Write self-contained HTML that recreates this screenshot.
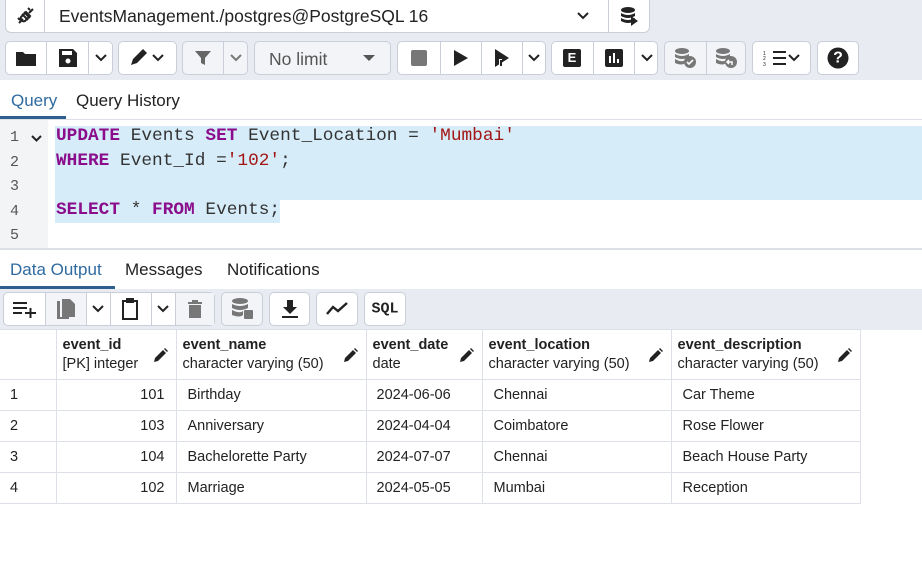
<!DOCTYPE html>
<html><head><meta charset="utf-8"><style>
*{box-sizing:border-box;margin:0;padding:0}
body{width:922px;height:561px;position:relative;background:#fff;font-family:"Liberation Sans",sans-serif;color:#222;overflow:hidden}
.a{position:absolute}
.btn{position:absolute;background:#fff;border:1px solid #c9ced8;border-radius:5px;height:34px}
.gb{background:#f3f4f7}
.sep{position:absolute;top:0;bottom:0;width:1px;background:#c9ced8}
.ic{position:absolute;top:50%;transform:translate(-50%,-50%)}
.code{font-family:"Liberation Mono",monospace;font-size:17.8px;position:absolute;left:56px;white-space:pre;color:#333}
.kw{color:#8b0d8b;font-weight:bold}.st{color:#a31515}
.ln{position:absolute;left:10px;font-family:"Liberation Mono",monospace;font-size:15px;color:#555}
table{border-collapse:collapse;position:absolute;left:0;top:329px;font-size:14.5px}
td,th{border:1px solid #dde0e6;height:31px;padding:0 6px;text-align:left;font-weight:normal}
th{height:50px;vertical-align:middle;position:relative;line-height:19px}
th b{font-weight:bold}
</style></head><body>
<div class="a" style="left:0;top:0;width:922px;height:80px;background:#e8ebf1"></div>
<div class="btn" style="left:5px;top:-2px;width:645px;height:35px;border-radius:0 0 6px 6px">
<div class="sep" style="left:38px"></div><div class="sep" style="left:602px"></div>
<svg class="ic" style="left:20px" width="22" height="22" viewBox="0 0 22 22" fill="none" stroke="#222" stroke-width="2"><path d="M4 18l4-4M18 4l-4 4M7 9l6 6M9 7l6 6M6 12a3 3 0 0 0 4 4l5-5-4-4-5 5zM3 13l2 2M13 3l2 2"/></svg>
<div class="a" style="left:53px;top:7px;font-size:17.5px;color:#222">EventsManagement./postgres@PostgreSQL 16</div>
<svg class="ic" style="left:577px" width="14" height="10" viewBox="0 0 14 10"><path d="M2 2l5 5 5-5" stroke="#222" stroke-width="2" fill="none"/></svg>
<svg class="ic" style="left:623px" width="20" height="20" viewBox="0 0 20 20" fill="#222"><ellipse cx="9" cy="4" rx="7" ry="3"/><path d="M2 7q7 4 14 0v3q-7 4-14 0zM2 12q7 4 14 0v3q-7 4-14 0z"/><path d="M12 10l7 5-7 5z"/></svg>
</div>
<div class="btn" style="left:5px;top:41px;width:108px">
<div class="sep" style="left:40px"></div><div class="sep" style="left:82px"></div>
<svg class="ic" style="left:20px" width="20" height="16" viewBox="0 0 20 16"><path d="M0 2h7l2 2h11v12H0z" fill="#222"/></svg>
<svg class="ic" style="left:62px" width="18" height="18" viewBox="0 0 18 18"><path d="M0 0h14l4 4v14H0z" fill="#222"/><rect x="3" y="2" width="10" height="4" fill="#fff"/><circle cx="9" cy="12" r="2.5" fill="#fff"/></svg>
<svg class="ic" style="left:95px" width="14" height="10" viewBox="0 0 14 10"><path d="M2 2l5 5 5-5" stroke="#222" stroke-width="2" fill="none"/></svg>
</div>
<div class="btn" style="left:118px;top:41px;width:59px">
<svg class="ic" style="left:29px" width="40" height="20" viewBox="0 0 40 20"><path d="M3 17l2-6 10-10 4 4-10 10z" fill="#222"/><path d="M25 7l5 5 5-5" stroke="#222" stroke-width="2" fill="none"/></svg>
</div>
<div class="btn gb" style="left:182px;top:41px;width:66px">
<div class="sep" style="left:40px"></div>
<svg class="ic" style="left:20px" width="18" height="18" viewBox="0 0 18 18"><path d="M1 2h16l-6 7v7l-4-2V9z" fill="#666"/></svg>
<svg class="ic" style="left:53px" width="14" height="10" viewBox="0 0 14 10"><path d="M2 2l5 5 5-5" stroke="#777" stroke-width="2" fill="none"/></svg>
</div>
<div class="btn gb" style="left:254px;top:41px;width:137px">
<div class="a" style="left:14px;top:7px;font-size:17.5px;color:#555">No limit</div>
<svg class="ic" style="left:114px" width="12" height="8" viewBox="0 0 12 8"><path d="M0 1h12L6 7z" fill="#555"/></svg>
</div>
<div class="btn" style="left:397px;top:41px;width:149px">
<div class="sep" style="left:42px"></div><div class="sep" style="left:83px"></div><div class="sep" style="left:124px"></div>
<svg class="ic" style="left:21px" width="16" height="16"><rect width="16" height="16" rx="2" fill="#777"/></svg>
<svg class="ic" style="left:63px" width="14" height="16"><path d="M0 0l14 8-14 8z" fill="#222"/></svg>
<svg class="ic" style="left:104px" width="16" height="18"><path d="M1 0l14 9-14 9z" fill="#222"/><path d="M5 10h3v8H5z" fill="#fff"/><path d="M6 11h2v6H6z" fill="#222"/></svg>
<svg class="ic" style="left:136px" width="14" height="10" viewBox="0 0 14 10"><path d="M2 2l5 5 5-5" stroke="#222" stroke-width="2" fill="none"/></svg>
</div>
<div class="btn" style="left:551px;top:41px;width:107px">
<div class="sep" style="left:41px"></div><div class="sep" style="left:82px"></div>
<div class="ic" style="left:20px;width:18px;height:18px;background:#222;border-radius:2px;color:#fff;font-weight:bold;font-size:13px;text-align:center;line-height:18px">E</div>
<svg class="ic" style="left:62px" width="18" height="18"><rect width="18" height="18" rx="2" fill="#222"/><path d="M5 7v7M9 4v10M13 10v4" stroke="#fff" stroke-width="2"/></svg>
<svg class="ic" style="left:95px" width="14" height="10" viewBox="0 0 14 10"><path d="M2 2l5 5 5-5" stroke="#222" stroke-width="2" fill="none"/></svg>
</div>
<div class="btn gb" style="left:664px;top:41px;width:82px">
<div class="sep" style="left:41px"></div>
<svg class="ic" style="left:20px" width="22" height="20" viewBox="0 0 22 20" fill="#777"><ellipse cx="8" cy="3" rx="7" ry="3"/><path d="M1 6q7 4 14 0v3q-7 4-14 0zM1 11q7 4 10 1v3q-3 3-10 0z"/><circle cx="16" cy="14" r="6"/><path d="M13 14l2 2 4-4" stroke="#fff" stroke-width="1.6" fill="none"/></svg>
<svg class="ic" style="left:61px" width="22" height="20" viewBox="0 0 22 20" fill="#777"><ellipse cx="8" cy="3" rx="7" ry="3"/><path d="M1 6q7 4 14 0v3q-7 4-14 0zM1 11q7 4 10 1v3q-3 3-10 0z"/><circle cx="16" cy="14" r="6"/><path d="M14 12l-2 2 2 2M12 14h5v3" stroke="#fff" stroke-width="1.5" fill="none"/></svg>
</div>
<div class="btn" style="left:752px;top:41px;width:59px">
<svg class="ic" style="left:29px" width="40" height="18" viewBox="0 0 40 18"><path d="M11 3h13M11 9h13M11 15h13" stroke="#222" stroke-width="2"/><text x="1" y="6" font-size="5" fill="#222">1</text><text x="1" y="11" font-size="5" fill="#222">2</text><text x="1" y="17" font-size="5" fill="#222">3</text><path d="M27 6l5 5 5-5" stroke="#222" stroke-width="2" fill="none"/></svg>
</div>
<div class="btn" style="left:817px;top:41px;width:42px">
<div class="ic" style="left:20px;width:21px;height:21px;border-radius:50%;background:#222;color:#fff;font-weight:bold;font-size:16px;text-align:center;line-height:21px">?</div>
</div>
<div class="a" style="left:11px;top:91px;font-size:17px;color:#2f6aa0">Query</div>
<div class="a" style="left:0;top:116px;width:66px;height:3px;background:#2f5f8f"></div>
<div class="a" style="left:76px;top:91px;font-size:17px;color:#222">Query History</div>
<div class="a" style="left:0;top:119px;width:922px;height:1px;background:#dde0e6"></div>
<div class="a" style="left:0;top:120px;width:48px;height:128px;background:#f3f4f6"></div>
<div class="a" style="left:55px;top:126px;width:867px;height:74px;background:#d6ecf9"></div>
<div class="a" style="left:55px;top:200px;width:225px;height:23px;background:#d6ecf9"></div>
<div class="ln" style="top:129px">1</div><div class="ln" style="top:154px">2</div><div class="ln" style="top:178px">3</div><div class="ln" style="top:203px">4</div><div class="ln" style="top:227px">5</div>
<svg class="a" style="left:31px;top:135px" width="11" height="8"><path d="M1 1l4.5 4.5L10 1" stroke="#222" stroke-width="2" fill="none"/></svg>
<div class="code" style="top:126px"><span class="kw">UPDATE</span> Events <span class="kw">SET</span> Event_Location = <span class="st">'Mumbai'</span></div>
<div class="code" style="top:151px"><span class="kw">WHERE</span> Event_Id =<span class="st">'102'</span>;</div>
<div class="code" style="top:200px"><span class="kw">SELECT</span> * <span class="kw">FROM</span> Events;</div>
<div class="a" style="left:0;top:248px;width:922px;height:2px;background:#dde0e6"></div>
<div class="a" style="left:10px;top:260px;font-size:17px;color:#2f6aa0">Data Output</div>
<div class="a" style="left:125px;top:260px;font-size:17px">Messages</div>
<div class="a" style="left:227px;top:260px;font-size:17px">Notifications</div>
<div class="a" style="left:0;top:286px;width:115px;height:3px;background:#2f5f8f"></div>
<div class="a" style="left:0;top:289px;width:922px;height:41px;background:#e8ebf1"></div>
<div class="btn" style="left:3px;top:292px;width:212px">
<div class="sep" style="left:41px"></div><div class="sep" style="left:82px"></div><div class="sep" style="left:106px"></div><div class="sep" style="left:147px"></div><div class="sep" style="left:171px"></div>
<div class="a gb" style="left:42px;top:0;width:40px;height:32px"></div>
<div class="a gb" style="left:172px;top:0;width:38px;height:32px"></div>
<svg class="ic" style="left:21px" width="26" height="18"><path d="M1 3h14M1 8h14M1 13h9M13 13h11M18.5 8v11" stroke="#222" stroke-width="2"/></svg>
<svg class="ic" style="left:62px" width="18" height="20"><path d="M0 2h3v16h9v2H0z" fill="#777"/><path d="M5 0h8l5 5v13H5z" fill="#777"/></svg>
<svg class="ic" style="left:94px" width="14" height="10"><path d="M2 2l5 5 5-5" stroke="#222" stroke-width="2" fill="none"/></svg>
<svg class="ic" style="left:126px" width="18" height="22"><path d="M2 3h14v18H2z" stroke="#222" stroke-width="2" fill="none"/><rect x="5" y="0" width="8" height="5" fill="#222"/></svg>
<svg class="ic" style="left:159px" width="14" height="10"><path d="M2 2l5 5 5-5" stroke="#222" stroke-width="2" fill="none"/></svg>
<svg class="ic" style="left:191px" width="14" height="18"><path d="M0 2h14v2H0zM4 0h6v2H4zM1 5h12v13H1z" fill="#777"/></svg>
</div>
<div class="btn gb" style="left:221px;top:292px;width:42px">
<svg class="ic" style="left:20px" width="22" height="22" viewBox="0 0 22 22" fill="#777"><ellipse cx="9" cy="3" rx="8" ry="3"/><path d="M1 6q8 4 16 0v4q-8 4-16 0zM1 12q8 4 11 1v4q-3 3-11 0z"/><rect x="13" y="12" width="9" height="9" rx="1"/></svg>
</div>
<div class="btn" style="left:269px;top:292px;width:41px"><svg class="ic" style="left:20px" width="16" height="18"><path d="M5 0h6v7h4l-7 7-7-7h4zM0 16h16v2H0z" fill="#222"/></svg></div>
<div class="btn" style="left:316px;top:292px;width:42px"><svg class="ic" style="left:20px" width="22" height="14"><path d="M1 12l6-7 5 4 9-8" stroke="#222" stroke-width="2.4" fill="none"/></svg></div>
<div class="btn" style="left:364px;top:292px;width:42px"><div class="ic" style="left:20px;font-family:'Liberation Mono',monospace;font-weight:bold;font-size:15px;color:#222">SQL</div></div>
<table>
<tr style="background:#fff"><th style="width:56px;border-left:none"></th>
<th style="width:120px"><b>event_id</b><br>[PK] integer<svg class="a" style="right:8px;top:18px" width="14" height="14"><path d="M0 14l1-4 8-8 3 3-8 8zM10 1l1-1 3 3-1 1z" fill="#222"/></svg></th>
<th style="width:190px"><b>event_name</b><br>character varying (50)<svg class="a" style="right:8px;top:18px" width="14" height="14"><path d="M0 14l1-4 8-8 3 3-8 8zM10 1l1-1 3 3-1 1z" fill="#222"/></svg></th>
<th style="width:116px"><b>event_date</b><br>date<svg class="a" style="right:8px;top:18px" width="14" height="14"><path d="M0 14l1-4 8-8 3 3-8 8zM10 1l1-1 3 3-1 1z" fill="#222"/></svg></th>
<th style="width:189px"><b>event_location</b><br>character varying (50)<svg class="a" style="right:8px;top:18px" width="14" height="14"><path d="M0 14l1-4 8-8 3 3-8 8zM10 1l1-1 3 3-1 1z" fill="#222"/></svg></th>
<th style="width:189px"><b>event_description</b><br>character varying (50)<svg class="a" style="right:8px;top:18px" width="14" height="14"><path d="M0 14l1-4 8-8 3 3-8 8zM10 1l1-1 3 3-1 1z" fill="#222"/></svg></th></tr>
<tr><td style="border-left:none;padding-left:10px">1</td><td style="text-align:right;padding-right:11px">101</td><td style="padding-left:11px">Birthday</td><td style="padding-left:10px">2024-06-06</td><td style="padding-left:11px">Chennai</td><td style="padding-left:11px">Car Theme</td></tr>
<tr><td style="border-left:none;padding-left:10px">2</td><td style="text-align:right;padding-right:11px">103</td><td style="padding-left:11px">Anniversary</td><td style="padding-left:10px">2024-04-04</td><td style="padding-left:11px">Coimbatore</td><td style="padding-left:11px">Rose Flower</td></tr>
<tr><td style="border-left:none;padding-left:10px">3</td><td style="text-align:right;padding-right:11px">104</td><td style="padding-left:11px">Bachelorette Party</td><td style="padding-left:10px">2024-07-07</td><td style="padding-left:11px">Chennai</td><td style="padding-left:11px">Beach House Party</td></tr>
<tr><td style="border-left:none;padding-left:10px">4</td><td style="text-align:right;padding-right:11px">102</td><td style="padding-left:11px">Marriage</td><td style="padding-left:10px">2024-05-05</td><td style="padding-left:11px">Mumbai</td><td style="padding-left:11px">Reception</td></tr>
</table>
</body></html>
